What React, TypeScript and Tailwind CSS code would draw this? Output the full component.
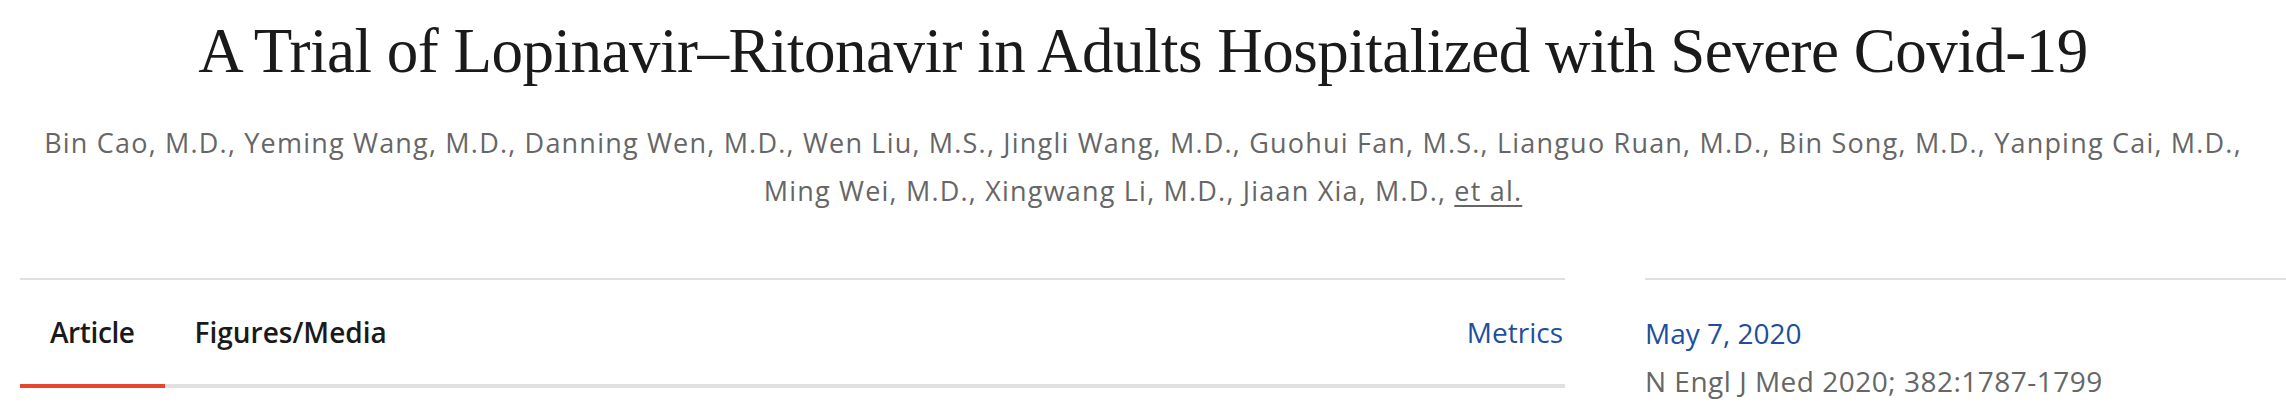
import React from "react";

export default function App() {
  return (
    <div className="w-[2286px] h-[406px] bg-white overflow-hidden">
      <h1
        className="pt-[20px] text-center text-[63px] leading-none tracking-[-0.5px] text-[#1a1a1a] font-normal"
        style={{ fontFamily: '"Liberation Serif", serif' }}
      >
        A Trial of Lopinavir–Ritonavir in Adults Hospitalized with Severe Covid-19
      </h1>
      <p
        className="mt-[36px] text-center text-[27px] leading-[48px] tracking-[1.2px] text-[#666666]"
        style={{ fontFamily: '"Open Sans", sans-serif' }}
      >
        Bin Cao, M.D., Yeming Wang, M.D., Danning Wen, M.D., Wen Liu, M.S., Jingli Wang, M.D., Guohui Fan, M.S., Lianguo Ruan, M.D., Bin Song, M.D., Yanping Cai, M.D.,
        <br />
        Ming Wei, M.D., Xingwang Li, M.D., Jiaan Xia, M.D., <span className="underline underline-offset-[4px]">et al.</span>
      </p>
      <div
        className="mt-[63px] flex pl-[20px] gap-[80px]"
        style={{ fontFamily: '"Open Sans", sans-serif' }}
      >
        <div className="w-[1545px] border-t-2 border-[#e0e0e0]">
          <div className="flex items-end border-b-4 border-[#e0e0e0]">
            <div className="px-[30px] pt-[32px] pb-[32px] text-[28px] leading-[40px] font-semibold tracking-[-0.4px] text-[#1a1a1a] border-b-4 border-[#e8452c] -mb-[4px]">
              Article
            </div>
            <div className="px-[30px] pt-[32px] pb-[32px] text-[28px] leading-[40px] font-semibold tracking-[0px] text-[#1a1a1a]">
              Figures/Media
            </div>
            <div className="ml-auto pr-[2px] pt-[32px] pb-[32px] text-[28px] leading-[40px] text-[#1e4f9c]">
              Metrics
            </div>
          </div>
        </div>
        <div className="flex-1 border-t-2 border-[#e0e0e0] pt-[29px]">
          <div className="text-[28px] leading-[48px] text-[#1e4f9c]">May 7, 2020</div>
          <div className="text-[28px] leading-[48px] tracking-[0.5px] text-[#666666]">N Engl J Med 2020; 382:1787-1799</div>
        </div>
      </div>
    </div>
  );
}
